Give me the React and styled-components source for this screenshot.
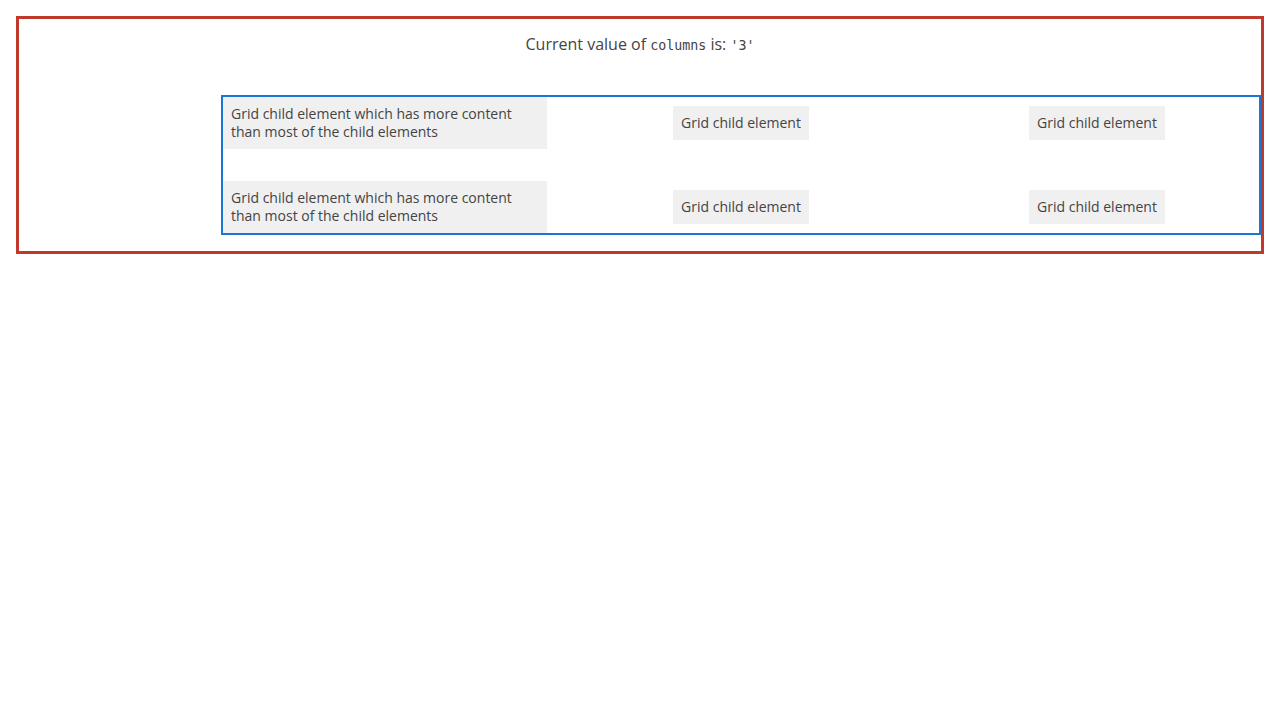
import React from "react";
import styled, { createGlobalStyle } from "styled-components";

const GlobalStyle = createGlobalStyle`
    body {
        margin: 0;
        font-family: "Open Sans", "Noto Sans", sans-serif;
        color: #444;
        background: #fff;
    }
`;

const Frame = styled.div`
    margin: 16px;
    border: 3px solid #bf3a2b;
    padding: 16px 0 16px 16px;
    display: flex;
    flex-direction: column;
`;

const Caption = styled.p`
    margin: 0 0 40px -16px;
    text-align: center;
    font-size: 16px;
    line-height: 18px;
`;

const Code = styled.code`
    font-family: "DejaVu Sans Mono", "Liberation Mono", monospace;
    font-size: 13.3px;
`;

const Grid = styled.div`
    margin-left: auto;
    width: 1036px;
    border: 2px solid #1976d2;
    display: grid;
    grid-template-columns: repeat(${(props) => props.columns}, 324px);
    gap: 32px;
    align-items: center;
    justify-items: center;
`;

const Cell = styled.div`
    background: #f0f0f0;
    padding: 8px;
    font-size: 14px;
    line-height: 18px;
    justify-self: ${(props) => (props.wide ? "stretch" : "center")};
    align-self: ${(props) => (props.wide ? "stretch" : "center")};
`;

const rows = [0, 1];

export default function App() {
    const columns = 3;
    return (
        <>
            <GlobalStyle />
            <Frame>
                <Caption>
                    Current value of <Code>columns</Code> is: <Code>'{columns}'</Code>
                </Caption>
                <Grid columns={columns}>
                    {rows.map((row) => (
                        <React.Fragment key={row}>
                            <Cell wide>
                                Grid child element which has more content than most of the child elements
                            </Cell>
                            <Cell>Grid child element</Cell>
                            <Cell>Grid child element</Cell>
                        </React.Fragment>
                    ))}
                </Grid>
            </Frame>
        </>
    );
}
